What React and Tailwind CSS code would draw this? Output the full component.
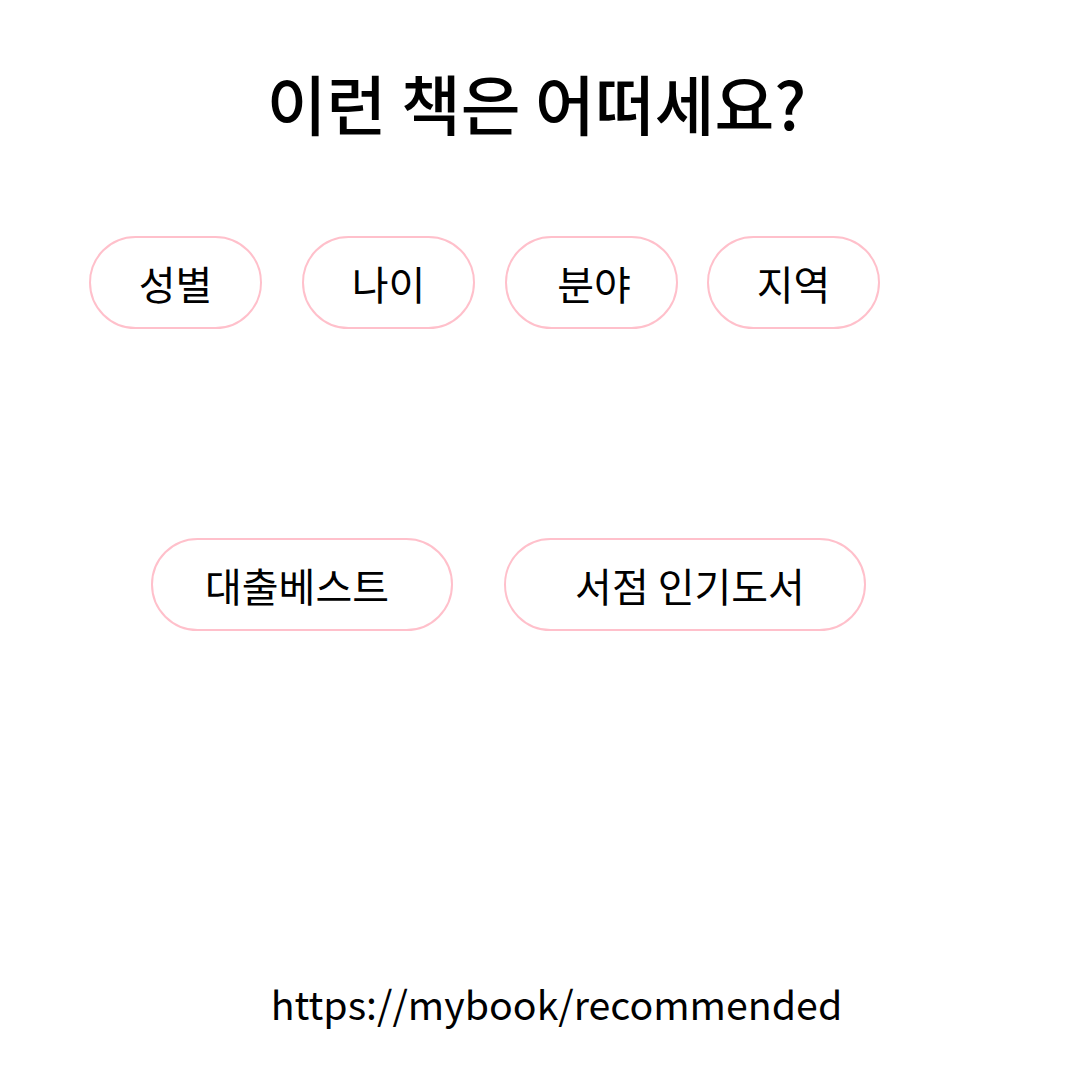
import React from "react";

function Pill({ children, className = "" }) {
  return (
    <button
      className={
        "flex items-center justify-center rounded-full border-2 border-[#ffc0cb] bg-white text-[40px] leading-none text-black " +
        className
      }
    >
      {children}
    </button>
  );
}

export default function App() {
  return (
    <div className="flex h-[1080px] w-[1080px] flex-col bg-white text-black font-['Noto_Sans_CJK_KR',sans-serif]">
      <h1 className="mt-[59px] pr-[7px] text-center text-[65px] font-medium leading-[87px]">
        이런 책은 어떠세요?
      </h1>
      <div className="mt-[90px] flex">
        <Pill className="ml-[89px] h-[93px] w-[173px]">성별</Pill>
        <Pill className="ml-[40px] h-[93px] w-[173px]">나이</Pill>
        <Pill className="ml-[30px] h-[93px] w-[173px] pl-[5px]">분야</Pill>
        <Pill className="ml-[29px] h-[93px] w-[173px]">지역</Pill>
      </div>
      <div className="mt-[209px] flex">
        <Pill className="ml-[151px] h-[93px] w-[302px] pr-[10px]">대출베스트</Pill>
        <Pill className="ml-[51px] h-[93px] w-[362px] pl-[10px]">서점 인기도서</Pill>
      </div>
      <div className="mt-auto mb-[47px] pl-[33px] text-center text-[39.3px] leading-[60px]">
        https://mybook/recommended
      </div>
    </div>
  );
}
